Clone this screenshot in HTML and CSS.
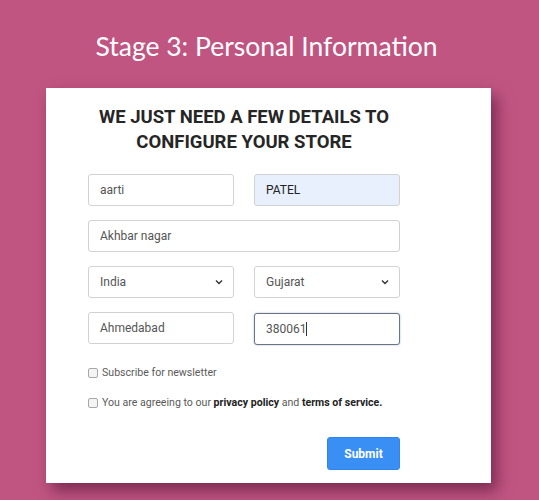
FILE: index.html
```html
<!DOCTYPE html>
<html>
<head>
<meta charset="utf-8">
<link rel="stylesheet" href="styles.css">
</head>
<body>
<h1 class="stage-title">Stage 3: Personal Information</h1>
<div class="card">
  <form class="form">
    <h2 class="heading">WE JUST NEED A FEW DETAILS TO CONFIGURE YOUR STORE</h2>
    <div class="grid">
      <input class="field" type="text" value="aarti">
      <input class="field autofill" type="text" value="PATEL">
      <input class="field wide" type="text" value="Akhbar nagar">
      <div class="select-wrap">
        <select class="field select"><option>India</option></select>
        <svg class="chev" width="8" height="6" viewBox="0 0 8 6"><path d="M1 1.5 L4 4.5 L7 1.5" fill="none" stroke="#333" stroke-width="1.4"/></svg>
      </div>
      <div class="select-wrap">
        <select class="field select"><option>Gujarat</option></select>
        <svg class="chev" width="8" height="6" viewBox="0 0 8 6"><path d="M1 1.5 L4 4.5 L7 1.5" fill="none" stroke="#333" stroke-width="1.4"/></svg>
      </div>
      <input class="field" type="text" value="Ahmedabad">
      <div class="field focused">380061<span class="caret"></span></div>
    </div>
    <label class="check"><span class="box"></span><span class="label-text">Subscribe for newsletter</span></label>
    <label class="check"><span class="box"></span><span class="label-text">You are agreeing to our <b>privacy policy</b> and <b>terms of service.</b></span></label>
    <div class="actions"><button type="button" class="submit">Submit</button></div>
  </form>
</div>
</body>
</html>
```
FILE: styles.css
```css
html, body {
  margin: 0;
  padding: 0;
}
body {
  background: #c05582;
  width: 539px;
  height: 500px;
  overflow: hidden;
  font-family: Roboto, "Liberation Sans", sans-serif;
}
.stage-title {
  margin: 0;
  padding: 31px 6px 0 0;
  height: 88px;
  box-sizing: border-box;
  text-align: center;
  color: #fff;
  font-family: Lato, "Open Sans", sans-serif;
  font-weight: 400;
  font-size: 26.5px;
  line-height: 30px;
}
.card {
  margin-left: 46px;
  width: 445px;
  height: 395px;
  background: #fff;
  box-shadow: 6px 8px 14px rgba(70, 10, 40, 0.55);
  box-sizing: border-box;
  padding: 17px 0 0 42px;
}
.form {
  width: 312px;
}
.heading {
  margin: 0 0 19px;
  text-align: center;
  font-size: 18.5px;
  line-height: 25px;
  font-weight: 700;
  color: #262626;
}
.grid {
  display: grid;
  grid-template-columns: 146px 146px;
  column-gap: 20px;
  row-gap: 14px;
}
.field {
  display: block;
  width: 100%;
  height: 32px;
  box-sizing: border-box;
  border: 1px solid #d2d2d2;
  border-radius: 3px;
  background: #fff;
  padding: 0 11px;
  font-family: Roboto, "Liberation Sans", sans-serif;
  font-size: 12px;
  color: #555;
  outline: none;
  margin: 0;
}
.autofill {
  background: #e8f0fe;
  color: #222;
}
.wide {
  grid-column: 1 / 3;
}
.select-wrap {
  position: relative;
}
.select {
  appearance: none;
  -webkit-appearance: none;
}
.chev {
  position: absolute;
  right: 11px;
  top: 13px;
}
.focused {
  border-color: #6a7486;
  box-shadow: 0 0 2px rgba(80, 110, 160, 0.5);
  line-height: 30px;
  color: #555;
  margin-top: 1px;
}
.caret {
  display: inline-block;
  width: 1px;
  height: 14px;
  background: #333;
  vertical-align: -3px;
}
.check {
  display: flex;
  align-items: center;
  font-size: 10.6px;
  color: #5a5a5a;
  height: 14px;
  line-height: 14px;
}
.check:first-of-type {
  margin-top: 21px;
}
.check + .check {
  margin-top: 16px;
}
.check b {
  color: #222;
  font-weight: 700;
}
.box {
  width: 8px;
  height: 8px;
  border: 1px solid #a8a8a8;
  border-radius: 2px;
  background: #f4f4f4;
  margin-right: 4px;
  flex: none;
}
.actions {
  display: flex;
  justify-content: flex-end;
  margin-top: 27px;
}
.submit {
  width: 73px;
  height: 33px;
  border: 1px solid #2f84ee;
  border-radius: 3px;
  background: #3a8ff4;
  color: #fff;
  font-family: Roboto, "Liberation Sans", sans-serif;
  font-weight: 700;
  font-size: 12px;
  padding: 0;
}
```
